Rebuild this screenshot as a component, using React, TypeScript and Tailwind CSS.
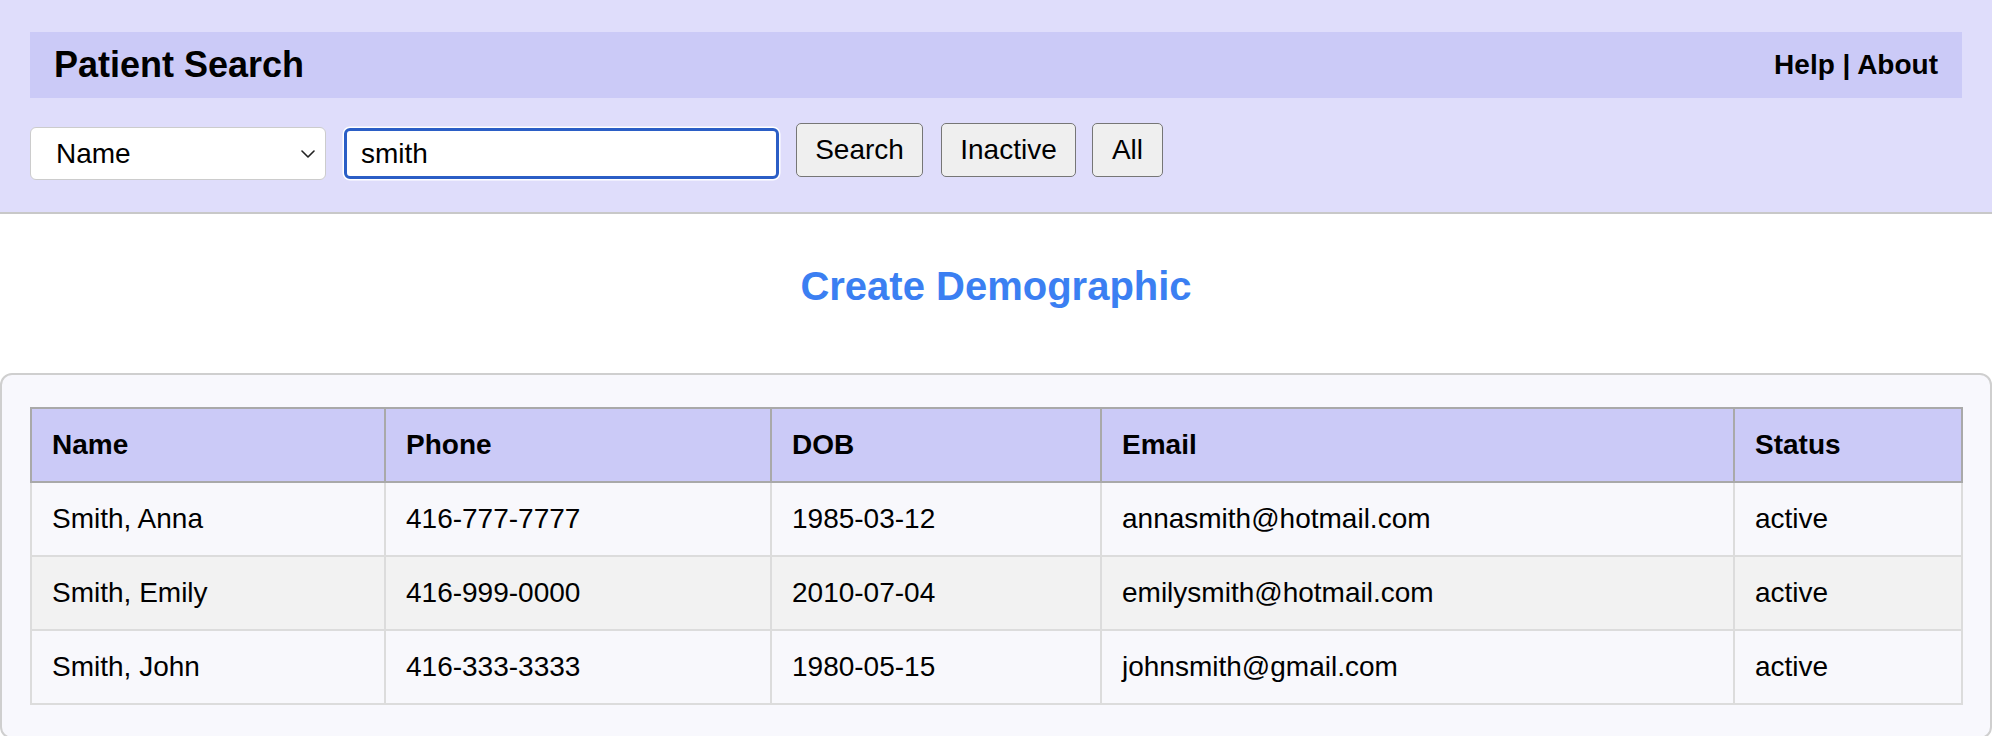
import React from "react";

const rows = [
  { name: "Smith, Anna", phone: "416-777-7777", dob: "1985-03-12", email: "annasmith@hotmail.com", status: "active" },
  { name: "Smith, Emily", phone: "416-999-0000", dob: "2010-07-04", email: "emilysmith@hotmail.com", status: "active" },
  { name: "Smith, John", phone: "416-333-3333", dob: "1980-05-15", email: "johnsmith@gmail.com", status: "active" },
];

export default function App() {
  return (
    <div className="w-[1992px] min-h-[736px] bg-white text-black font-['Liberation_Sans',Arial,Helvetica,sans-serif]">
      <div className="bg-[#dfddfb] border-b-2 border-[#c8c8c8] px-[30px] pt-[32px] pb-[32px]">
        <div className="h-[66px] bg-[#cbcaf7] flex items-center justify-between pl-[24px] pr-[24px]">
          <h1 className="text-[36px] font-bold leading-none">Patient Search</h1>
          <div className="text-[28px] font-bold leading-none">Help | About</div>
        </div>
        <div className="mt-[25px] flex items-start">
          <div className="mt-[4px] h-[53px] w-[296px] bg-white border-[1.5px] border-[#cccccc] rounded-[6px] flex items-center justify-between pl-[25px] pr-[10px]">
            <span className="text-[28px] leading-none">Name</span>
            <svg width="14" height="8" viewBox="0 0 14 8" fill="none">
              <path d="M1 1l6 6 6-6" stroke="#222" strokeWidth="1.6" strokeLinecap="round" strokeLinejoin="round" />
            </svg>
          </div>
          <div className="ml-[18px] mt-[5px] h-[51px] w-[435px] bg-white border-[3px] border-[#2b5ec6] rounded-[6px] shadow-[0_0_0_1.5px_#ffffff] flex items-center pl-[14px]">
            <span className="text-[28px] leading-none">smith</span>
          </div>
          <button className="ml-[17px] h-[54px] w-[127px] bg-[#efefef] border-[1.5px] border-[#767676] rounded-[5px] text-[28px] leading-none">
            Search
          </button>
          <button className="ml-[18px] h-[54px] w-[135px] bg-[#efefef] border-[1.5px] border-[#767676] rounded-[5px] text-[28px] leading-none">
            Inactive
          </button>
          <button className="ml-[16px] h-[54px] w-[71px] bg-[#efefef] border-[1.5px] border-[#767676] rounded-[5px] text-[28px] leading-none">
            All
          </button>
        </div>
      </div>

      <div className="h-[159px] flex items-center justify-center pb-[16px]">
        <h2 className="text-[40px] font-bold text-[#3b7ff2] leading-none">Create Demographic</h2>
      </div>

      <div className="bg-[#f8f8fd] border-2 border-[#cfcfcf] rounded-[12px] px-[28px] pt-[32px] pb-[32px]">
        <table className="w-full table-fixed border-collapse text-[28px]">
          <colgroup>
            <col className="w-[354px]" />
            <col className="w-[386px]" />
            <col className="w-[330px]" />
            <col className="w-[633px]" />
            <col className="w-[228px]" />
          </colgroup>
          <thead>
            <tr className="h-[74px] bg-[#cbcaf7]">
              {["Name", "Phone", "DOB", "Email", "Status"].map((h) => (
                <th key={h} className="border-2 border-[#a9a9a9] text-left font-bold px-[20px]">
                  {h}
                </th>
              ))}
            </tr>
          </thead>
          <tbody>
            {rows.map((r, i) => (
              <tr key={r.name} className={i % 2 === 1 ? "h-[74px] bg-[#f2f2f2]" : "h-[74px] bg-[#f8f8fc]"}>
                <td className="border-2 border-[#dcdcdc] px-[20px]">{r.name}</td>
                <td className="border-2 border-[#dcdcdc] px-[20px]">{r.phone}</td>
                <td className="border-2 border-[#dcdcdc] px-[20px]">{r.dob}</td>
                <td className="border-2 border-[#dcdcdc] px-[20px]">{r.email}</td>
                <td className="border-2 border-[#dcdcdc] px-[20px]">{r.status}</td>
              </tr>
            ))}
          </tbody>
        </table>
      </div>
    </div>
  );
}
